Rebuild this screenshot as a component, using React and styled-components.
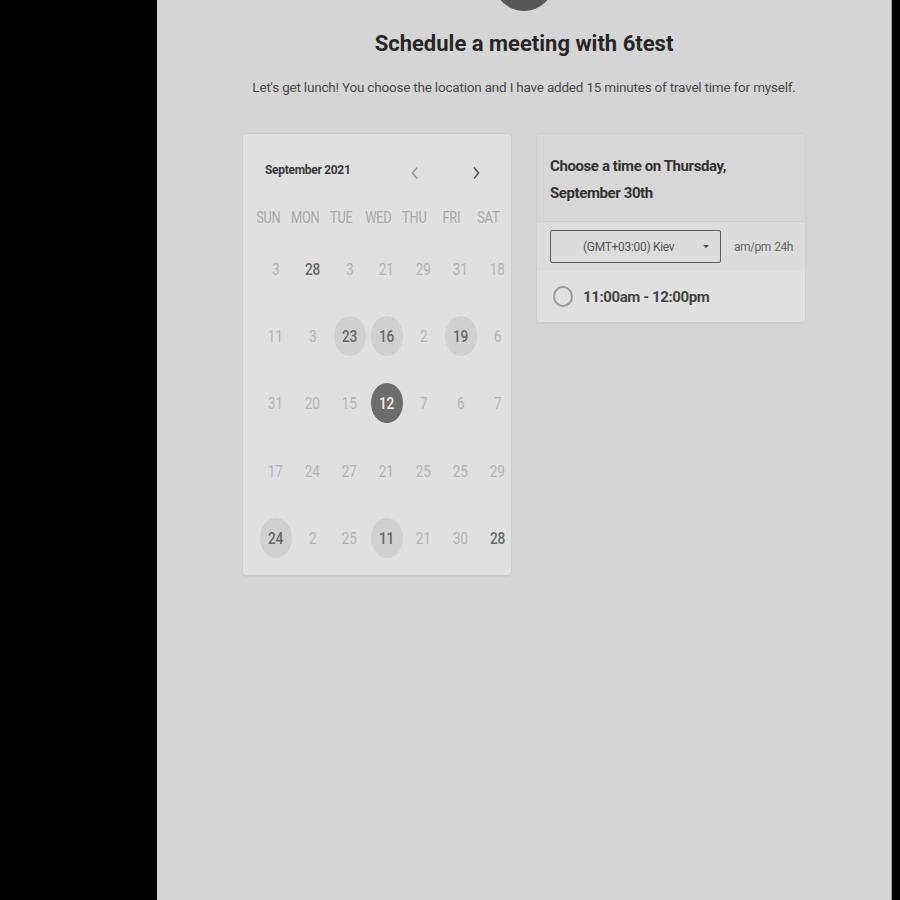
import React from "react";
import styled, { createGlobalStyle } from "styled-components";

const Global = createGlobalStyle`
  html, body { margin: 0; padding: 0; background: #000; }
  body { font-family: Roboto, "Liberation Sans", sans-serif; }
`;

const Page = styled.div`
  margin-left: 157px;
  width: 734px;
  height: 900px;
  background: #d5d5d5;
  border-right: 1px solid #9c9c9c;
  overflow: hidden;
  display: flex;
  flex-direction: column;
  align-items: center;
`;

const Avatar = styled.div`
  width: 60px;
  height: 60px;
  border-radius: 50%;
  background: #565656;
  margin-top: -49px;
  flex-shrink: 0;
`;

const Title = styled.h1`
  margin: 19px 0 0;
  font-size: 22px;
  font-weight: 700;
  letter-spacing: 0;
  color: #262626;
  line-height: 28px;
`;

const Subtitle = styled.p`
  margin: 19px 0 0;
  font-size: 13.5px;
  letter-spacing: -0.2px;
  color: #4a4a4a;
  line-height: 20px;
`;

const Columns = styled.div`
  margin-top: 37px;
  display: flex;
  gap: 26px;
  align-items: flex-start;
`;

const Card = styled.div`
  width: 268px;
  background: #e0e0e0;
  border-radius: 3px;
  box-shadow: 0 0 0 1px #cdcdcd, 0 1px 2px rgba(0, 0, 0, 0.12);
`;

const Calendar = styled(Card)`
  box-sizing: border-box;
  padding: 22px 0 4px 14px;
`;

const CalHeader = styled.div`
  height: 30px;
  display: flex;
  align-items: center;
  padding-left: 8px;
`;

const Month = styled.span`
  font-size: 12px;
  font-weight: 700;
  letter-spacing: -0.3px;
  color: #3a3a3a;
  width: 140px;
  margin-top: -2px;
`;

const Arrow = styled.span`
  width: 20px;
  display: flex;
  justify-content: center;
  color: ${(p) => (p.$dim ? "#9a9a9a" : "#555")};
  margin-left: ${(p) => p.$ml || 0}px;
  margin-top: 4px;
`;

const WeekRow = styled.div`
  display: grid;
  grid-template-columns: repeat(7, 36.6px);
  margin: 14px 0 1px -7px;
`;

const Grid = styled.div`
  display: grid;
  grid-template-columns: repeat(7, 37px);
`;

const Weekday = styled.div`
  height: 34px;
  display: flex;
  align-items: center;
  justify-content: center;
  font-size: 16px;
  letter-spacing: -0.3px;
  color: #a8a8a8;
  transform: scaleX(0.8);
`;

const DayCell = styled.div`
  height: 67.3px;
  display: flex;
  align-items: center;
  justify-content: center;
`;

const Day = styled.div`
  width: 32px;
  height: 40px;
  border-radius: 50%;
  display: flex;
  align-items: center;
  justify-content: center;
  background: ${(p) =>
    p.$kind === "sel" ? "#6c6c6c" : p.$kind === "avail" ? "#d0d0d0" : "transparent"};
`;

const Num = styled.span`
  font-size: 17px;
  letter-spacing: -0.2px;
  transform: scaleX(0.8);
  font-weight: ${(p) => (p.$kind === "plain" ? 400 : 500)};
  color: ${(p) =>
    p.$kind === "sel" ? "#f2f2f2" : p.$kind === "plain" ? "#b4b4b4" : "#666"};
`;

const PanelHead = styled.div`
  background: #d7d7d7;
  padding: 19px 13px 14px;
  font-size: 15px;
  font-weight: 700;
  letter-spacing: -0.4px;
  line-height: 27px;
  color: #333;
  border-radius: 3px 3px 0 0;
`;

const TzRow = styled.div`
  background: #dcdcdc;
  border-top: 1px solid #cfcfcf;
  height: 49px;
  display: flex;
  align-items: center;
  padding-left: 13px;
`;

const Select = styled.div`
  box-sizing: border-box;
  width: 171px;
  height: 33px;
  border: 1px solid #5c5c5c;
  border-radius: 2px;
  display: flex;
  align-items: center;
  padding: 0 11px 0 32px;
  font-size: 12px;
  letter-spacing: -0.3px;
  color: #555;
`;

const SelText = styled.span`
  flex: 1;
`;

const Caret = styled.span`
  width: 0;
  height: 0;
  border-left: 3px solid transparent;
  border-right: 3px solid transparent;
  border-top: 3px solid #444;
`;

const Format = styled.span`
  margin-left: 13px;
  font-size: 12px;
  letter-spacing: -0.5px;
  color: #666;
  word-spacing: 1px;
`;

const SlotRow = styled.div`
  background: #e0e0e0;
  height: 51px;
  display: flex;
  align-items: center;
  padding-left: 16px;
  border-radius: 0 0 3px 3px;
`;

const Radio = styled.span`
  box-sizing: border-box;
  width: 20px;
  height: 21px;
  border-radius: 50%;
  border: 2px solid #9c9c9c;
`;

const SlotText = styled.span`
  margin-left: 10px;
  font-size: 15px;
  font-weight: 700;
  letter-spacing: -0.4px;
  color: #444;
`;

const Chevron = ({ left }) => (
  <svg width="10" height="14" viewBox="0 0 10 14" fill="none" stroke="currentColor" strokeWidth="1.6">
    <path d={left ? "M7 1.5 L2.5 7 L7 12.5" : "M3 1.5 L7.5 7 L3 12.5"} />
  </svg>
);

const weekdays = ["SUN", "MON", "TUE", "WED", "THU", "FRI", "SAT"];

const days = [
  [["3"], ["28", "bold"], ["3"], ["21"], ["29"], ["31"], ["18"]],
  [["11"], ["3"], ["23", "avail"], ["16", "avail"], ["2"], ["19", "avail"], ["6"]],
  [["31"], ["20"], ["15"], ["12", "sel"], ["7"], ["6"], ["7"]],
  [["17"], ["24"], ["27"], ["21"], ["25"], ["25"], ["29"]],
  [["24", "avail"], ["2"], ["25"], ["11", "avail"], ["21"], ["30"], ["28", "bold"]],
];

export default function App() {
  return (
    <>
      <Global />
      <Page>
        <Avatar />
        <Title>Schedule a meeting with 6test</Title>
        <Subtitle>
          Let's get lunch! You choose the location and I have added 15 minutes of travel time for myself.
        </Subtitle>
        <Columns>
          <Calendar>
            <CalHeader>
              <Month>September 2021</Month>
              <Arrow $dim>
                <Chevron left />
              </Arrow>
              <Arrow $ml={41}>
                <Chevron />
              </Arrow>
            </CalHeader>
            <WeekRow>
              {weekdays.map((w) => (
                <Weekday key={w}>{w}</Weekday>
              ))}
            </WeekRow>
            <Grid>
              {days.flat().map(([n, kind = "plain"], i) => (
                <DayCell key={i}>
                  <Day $kind={kind}>
                    <Num $kind={kind}>{n}</Num>
                  </Day>
                </DayCell>
              ))}
            </Grid>
          </Calendar>
          <Card>
            <PanelHead>
              Choose a time on Thursday,
              <br />
              September 30th
            </PanelHead>
            <TzRow>
              <Select>
                <SelText>(GMT+03:00) Kiev</SelText>
                <Caret />
              </Select>
              <Format>am/pm 24h</Format>
            </TzRow>
            <SlotRow>
              <Radio />
              <SlotText>11:00am - 12:00pm</SlotText>
            </SlotRow>
          </Card>
        </Columns>
      </Page>
    </>
  );
}
